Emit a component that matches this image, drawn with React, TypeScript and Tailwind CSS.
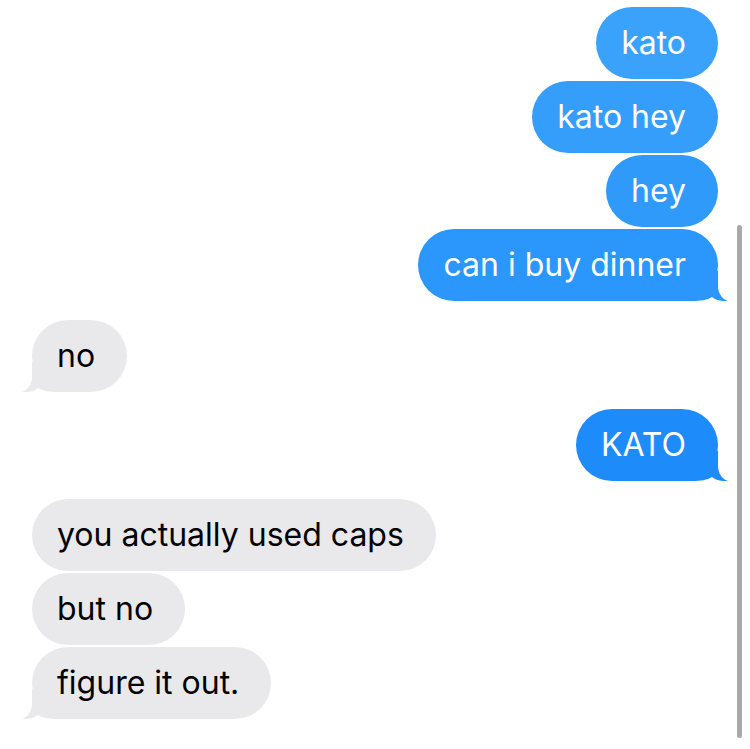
type Msg = { text: string; bg: string; fill: string; tail?: boolean }

const font = { fontFamily: 'Inter, "Noto Sans", sans-serif' }

function Tail({ side, fill }: { side: 'left' | 'right'; fill: string }) {
  return (
    <svg
      width="46"
      height="30"
      viewBox="0 0 46 30"
      className={
        side === 'left'
          ? 'pointer-events-none absolute bottom-0 left-[-10px]'
          : 'pointer-events-none absolute bottom-0 right-[-10px] -scale-x-100'
      }
    >
      <path d="M10 0 L10 15 C10 23 5 28.5 0 30 C7 30.5 12.5 29 16 26 C21 29 27 30 36 30 L46 30 L46 0 Z" className={fill} />
    </svg>
  )
}

function Bubble({ msg, side }: { msg: Msg; side: 'left' | 'right' }) {
  return (
    <div className={side === 'right' ? 'flex justify-end pr-[32px]' : 'flex justify-start pl-[32px]'}>
      <div className={`relative rounded-[36px] pl-[25px] pr-[32px] py-4 text-[32px] leading-[40px] ${msg.bg}`}>
        <span className="relative z-10">{msg.text}</span>
        {msg.tail && <Tail side={side} fill={msg.fill} />}
      </div>
    </div>
  )
}

const sent1: Msg[] = [
  { text: 'kato', bg: 'bg-[#3ba2fb] text-white', fill: 'fill-[#3ba2fb]' },
  { text: 'kato hey', bg: 'bg-[#359efb] text-white', fill: 'fill-[#359efb]' },
  { text: 'hey', bg: 'bg-[#309afb] text-white', fill: 'fill-[#309afb]' },
  { text: 'can i buy dinner', bg: 'bg-[#2b96fb] text-white', fill: 'fill-[#2b96fb]', tail: true },
]

const recv2: Msg[] = [
  { text: 'you actually used caps', bg: 'bg-[#e9e9eb] text-black', fill: 'fill-[#e9e9eb]' },
  { text: 'but no', bg: 'bg-[#e9e9eb] text-black', fill: 'fill-[#e9e9eb]' },
  { text: 'figure it out.', bg: 'bg-[#e9e9eb] text-black', fill: 'fill-[#e9e9eb]', tail: true },
]

export default function App() {
  return (
    <div className="relative h-[749px] w-[750px] overflow-hidden bg-white antialiased" style={font}>
      <div className="flex flex-col pt-[7px]">
        <div className="flex flex-col gap-[2px]">
          {sent1.map((m) => (
            <Bubble key={m.text} msg={m} side="right" />
          ))}
        </div>
        <div className="mt-[19px]">
          <Bubble msg={{ text: 'no', bg: 'bg-[#e9e9eb] text-black', fill: 'fill-[#e9e9eb]', tail: true }} side="left" />
        </div>
        <div className="mt-[17px]">
          <Bubble msg={{ text: 'KATO', bg: 'bg-[#1d8bfa] text-white', fill: 'fill-[#1d8bfa]', tail: true }} side="right" />
        </div>
        <div className="mt-[18px] flex flex-col gap-[2px]">
          {recv2.map((m) => (
            <Bubble key={m.text} msg={m} side="left" />
          ))}
        </div>
      </div>

      {/* scroll indicator */}
      <div className="absolute right-[8px] top-[225px] h-[513px] w-[5px] rounded-full bg-[#a8a8a8]" />
    </div>
  )
}
